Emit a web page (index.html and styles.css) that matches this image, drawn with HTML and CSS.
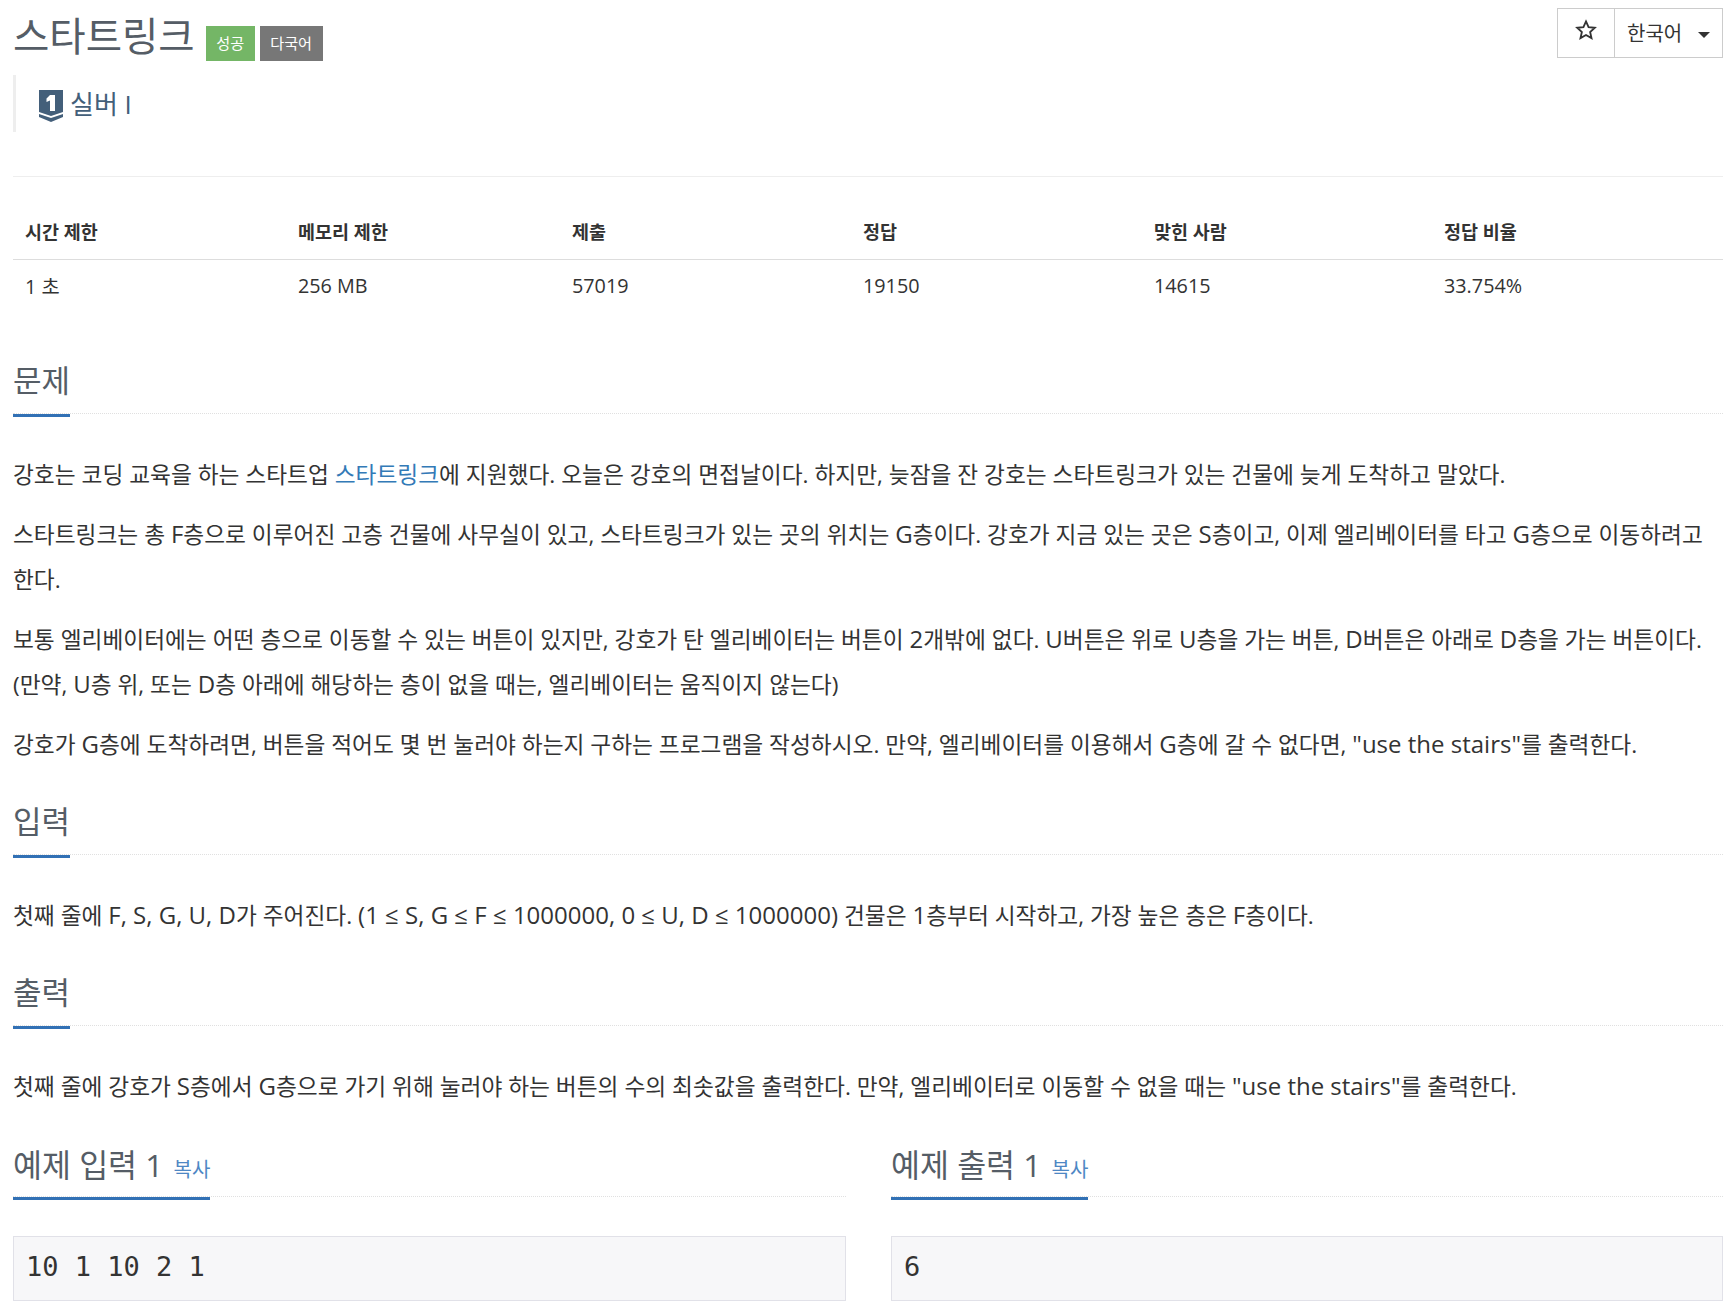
FILE: index.html
```html
<!DOCTYPE html>
<html lang="ko">
<head>
<meta charset="utf-8">
<title>스타트링크</title>
<link rel="stylesheet" href="styles.css">
</head>
<body>
<main class="page">
  <header class="title-row">
    <div class="title-wrap">
      <h1 class="title">스타트링크</h1>
      <span class="label label-green">성공</span>
      <span class="label label-gray">다국어</span>
    </div>
    <div class="btn-group">
      <button class="btn btn-star" type="button">
        <svg class="star" viewBox="0 0 24 24" width="22" height="22"><path d="M12 2.6l2.8 6.3 6.8.7-5.1 4.6 1.5 6.7-6-3.5-6 3.5 1.5-6.7-5.1-4.6 6.8-.7z" fill="none" stroke="#333" stroke-width="2" stroke-linejoin="miter"/></svg>
      </button>
      <button class="btn btn-lang" type="button">한국어<span class="caret"></span></button>
    </div>
  </header>
  <blockquote class="tier">
    <svg class="tier-icon" viewBox="0 0 24 32" width="24" height="32">
      <path d="M0 0h24v22l-12 4-12-4z" fill="#435f7a"/>
      <path d="M0 24l12 4 12-4v3l-12 5-12-5z" fill="#435f7a"/>
      <path d="M11 5h5v16h-5V10.5L7.5 12V8.5z" fill="#fff"/>
    </svg>
    <a class="tier-name" href="#">실버 I</a>
  </blockquote>
  <hr class="rule">
  <table class="stats">
    <thead>
      <tr><th class="c1">시간 제한</th><th class="c2">메모리 제한</th><th class="c3">제출</th><th class="c4">정답</th><th class="c5">맞힌 사람</th><th class="c6">정답 비율</th></tr>
    </thead>
    <tbody>
      <tr><td>1 초</td><td>256 MB</td><td>57019</td><td>19150</td><td>14615</td><td>33.754%</td></tr>
    </tbody>
  </table>

  <section class="section first">
    <div class="headline"><h2>문제</h2></div>
    <div class="prose">
      <p>강호는 코딩 교육을 하는 스타트업 <a href="#">스타트링크</a>에 지원했다. 오늘은 강호의 면접날이다. 하지만, 늦잠을 잔 강호는 스타트링크가 있는 건물에 늦게 도착하고 말았다.</p>
      <p>스타트링크는 총 <span class="en">F</span>층으로 이루어진 고층 건물에 사무실이 있고, 스타트링크가 있는 곳의 위치는 <span class="en">G</span>층이다. 강호가 지금 있는 곳은 <span class="en">S</span>층이고, 이제 엘리베이터를 타고 <span class="en">G</span>층으로 이동하려고 한다.</p>
      <p>보통 엘리베이터에는 어떤 층으로 이동할 수 있는 버튼이 있지만, 강호가 탄 엘리베이터는 버튼이 <span class="en">2</span>개밖에 없다. <span class="en">U</span>버튼은 위로 <span class="en">U</span>층을 가는 버튼, <span class="en">D</span>버튼은 아래로 <span class="en">D</span>층을 가는 버튼이다. (만약, <span class="en">U</span>층 위, 또는 <span class="en">D</span>층 아래에 해당하는 층이 없을 때는, 엘리베이터는 움직이지 않는다)</p>
      <p>강호가 <span class="en">G</span>층에 도착하려면, 버튼을 적어도 몇 번 눌러야 하는지 구하는 프로그램을 작성하시오. 만약, 엘리베이터를 이용해서 <span class="en">G</span>층에 갈 수 없다면, <span class="en">"use the stairs"</span>를 출력한다.</p>
    </div>
  </section>
  <section class="section">
    <div class="headline"><h2>입력</h2></div>
    <div class="prose"><p>첫째 줄에 <span class="en">F, S, G, U, D</span>가 주어진다. <span class="en">(1 ≤ S, G ≤ F ≤ 1000000, 0 ≤ U, D ≤ 1000000)</span> 건물은 <span class="en">1</span>층부터 시작하고, 가장 높은 층은 <span class="en">F</span>층이다.</p></div>
  </section>
  <section class="section">
    <div class="headline"><h2>출력</h2></div>
    <div class="prose"><p>첫째 줄에 강호가 <span class="en">S</span>층에서 <span class="en">G</span>층으로 가기 위해 눌러야 하는 버튼의 수의 최솟값을 출력한다. 만약, 엘리베이터로 이동할 수 없을 때는 <span class="en">"use the stairs"</span>를 출력한다.</p></div>
  </section>
  <div class="samples">
    <section class="sample">
      <div class="headline"><h2>예제 입력 1 <a class="copy" href="#">복사</a></h2></div>
      <pre class="code">10 1 10 2 1</pre>
    </section>
    <section class="sample">
      <div class="headline"><h2>예제 출력 1 <a class="copy" href="#">복사</a></h2></div>
      <pre class="code">6</pre>
    </section>
  </div>
</main>
</body>
</html>
```
FILE: styles.css
```css
* { box-sizing: border-box; }
html, body { margin: 0; padding: 0; background: #fff; }
body {
  font-family: "Open Sans", "Noto Sans CJK KR", sans-serif;
  font-size: 18px;
  color: #333;
  height: 1314px;
  overflow: hidden;
}
.page { padding: 0 7px 0 13px; }
.title-row { display: flex; justify-content: space-between; align-items: flex-start; height: 75px; }
.title-wrap { display: flex; align-items: flex-start; }
.title { margin: 11px 0 0; font-size: 39.5px; line-height: 50px; font-weight: 400; color: #555d66; }
.label { display: block; margin-top: 26px; height: 35px; line-height: 35px; padding: 0 10.5px; font-size: 15.2px; color: #fff; }
.label-green { margin-left: 11px; background: #74b666; }
.label-gray { margin-left: 5px; background: #777; }
.btn-group { display: flex; margin-top: 8px; }
.btn { height: 50px; background: #fff; border: 1px solid #ccc; font: inherit; color: #333; padding: 0; }
.btn-star { width: 58px; display: flex; align-items: center; justify-content: center; padding-bottom: 6px; }
.btn-lang { width: 109px; margin-left: -1px; font-size: 20px; text-align: left; padding: 0 0 2px 12px; display: flex; align-items: center; }
.caret { width: 0; height: 0; border-left: 6px solid transparent; border-right: 6px solid transparent; border-top: 6px solid #333; margin: 6px 0 0 16px; }
.tier { margin: 0; height: 57px; border-left: 3px solid #eee; padding: 13px 0 0 23px; display: flex; align-items: flex-start; }
.tier-icon { display: block; margin-right: 7px; margin-top: 2px; }
.tier-name { font-size: 26px; line-height: 32px; color: #435f7a; text-decoration: none; }
.rule { margin: 44px 0 0; border: 0; border-top: 1px solid #eee; }
.stats { width: 1710px; border-collapse: collapse; table-layout: fixed; margin-top: 23px; }
.stats th, .stats td { padding: 0 12px; text-align: left; font-size: 19.8px; color: #333; }
.stats th { height: 59px; padding-top: 4px; font-size: 18.5px; font-weight: 700; border-bottom: 1px solid #ddd; }
.stats td { height: 52px; }
.c1 { width: 273px; } .c2 { width: 274px; } .c3 { width: 291px; } .c4 { width: 291px; } .c5 { width: 290px; } .c6 { width: 291px; }
.section.first { margin-top: 46px; }
.section { margin-top: 31px; }
.headline { border-bottom: 1px dotted #e0e0e0; height: 57px; }
.headline h2 { display: inline-block; margin: 0; height: 60px; font-size: 31px; line-height: 47px; font-weight: 400; color: #555d66; border-bottom: 3px solid #3271b5; white-space: pre-wrap; }
.prose { padding-top: 38px; }
.prose p { margin: 0 0 15px; font-size: 22.7px; line-height: 45px; color: #333; }
.prose .en { font-size: 24px; line-height: 1; }
.prose a { color: #337ab7; text-decoration: none; }
.samples { display: grid; grid-template-columns: 833px 832px; gap: 45px; margin-top: 31px; }
.sample h2 { font-size: 31.5px; line-height: 49px; }
.copy { font-size: 20px; color: #4e87c4; text-decoration: none; margin-left: 2px; }
.code { margin: 39px 0 0; height: 65px; background: #f7f7f9; border: 1px solid #e1e1e8; padding: 0 12px; font-family: "DejaVu Sans Mono", monospace; font-size: 27px; line-height: 60px; color: #333; }
```
